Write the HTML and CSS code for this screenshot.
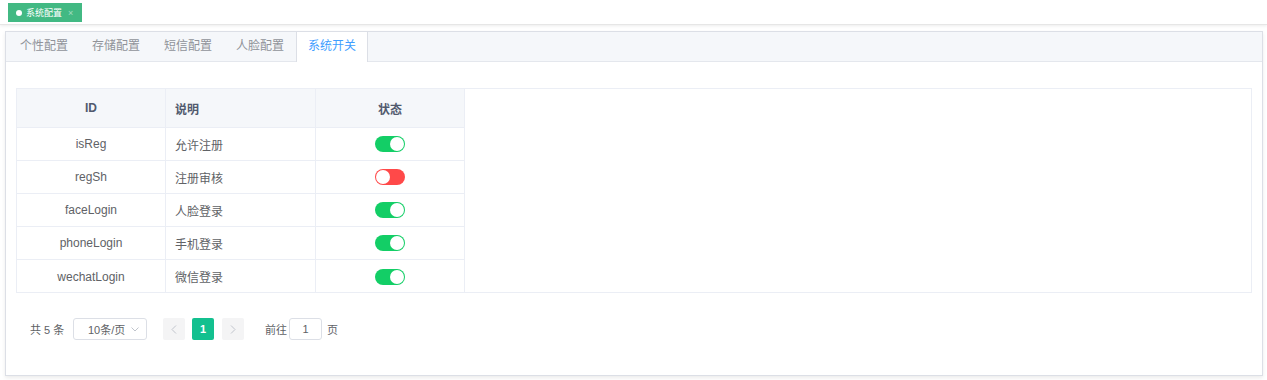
FILE: index.html
```html
<!DOCTYPE html>
<html lang="zh">
<head>
<meta charset="utf-8">
<link rel="stylesheet" href="styles.css">
</head>
<body>
<div class="tagsbar">
  <span class="tag"><span class="dot"></span>系统配置<span class="close">×</span></span>
</div>
<div class="card">
  <div class="tabs">
    <div class="tab">个性配置</div>
    <div class="tab">存储配置</div>
    <div class="tab">短信配置</div>
    <div class="tab">人脸配置</div>
    <div class="tab active">系统开关</div>
  </div>
  <div class="content">
    <div class="table">
      <div class="row head">
        <div class="cell c">ID</div>
        <div class="cell">说明</div>
        <div class="cell c">状态</div>
      </div>
      <div class="row">
        <div class="cell c">isReg</div>
        <div class="cell">允许注册</div>
        <div class="cell c"><span class="sw on"></span></div>
      </div>
      <div class="row">
        <div class="cell c">regSh</div>
        <div class="cell">注册审核</div>
        <div class="cell c"><span class="sw off"></span></div>
      </div>
      <div class="row">
        <div class="cell c">faceLogin</div>
        <div class="cell">人脸登录</div>
        <div class="cell c"><span class="sw on"></span></div>
      </div>
      <div class="row">
        <div class="cell c">phoneLogin</div>
        <div class="cell">手机登录</div>
        <div class="cell c"><span class="sw on"></span></div>
      </div>
      <div class="row last">
        <div class="cell c">wechatLogin</div>
        <div class="cell">微信登录</div>
        <div class="cell c"><span class="sw on"></span></div>
      </div>
    </div>
    <div class="pager">
      <span class="total">共 5 条</span>
      <span class="select"><span>10条/页</span><svg width="8" height="5" viewBox="0 0 8 5"><path d="M0.5 0.5 L4 4 L7.5 0.5" fill="none" stroke="#c0c4cc" stroke-width="1"/></svg></span>
      <span class="pbtn"><svg width="6" height="9" viewBox="0 0 6 9"><path d="M5 0.5 L1 4.5 L5 8.5" fill="none" stroke="#c0c4cc" stroke-width="1"/></svg></span>
      <span class="pnum">1</span>
      <span class="pbtn"><svg width="6" height="9" viewBox="0 0 6 9"><path d="M1 0.5 L5 4.5 L1 8.5" fill="none" stroke="#c0c4cc" stroke-width="1"/></svg></span>
      <span class="goto">前往<span class="jump">1</span>页</span>
    </div>
  </div>
</div>
</body>
</html>
```
FILE: styles.css
```css
* { box-sizing: border-box; }
html, body { margin: 0; padding: 0; background: #fff; }
body {
  font-family: "Helvetica Neue", "Liberation Sans", "Noto Sans CJK SC", sans-serif;
  font-size: 12px;
  color: #606266;
}
.tagsbar {
  height: 25px;
  padding: 3px 8px 0;
  border-bottom: 1px solid #e6e6e6;
  box-shadow: 0 1px 3px rgba(0,0,0,0.08);
}
.tag {
  display: inline-flex;
  align-items: center;
  white-space: nowrap;
  height: 19px;
  padding: 0 8px 0 7px;
  background: #42b983;
  color: #fff;
  font-size: 9px;
  border: 1px solid #42b983;
}
.tag .dot {
  flex: none;
  width: 6px; height: 6px; border-radius: 50%;
  background: #fff; margin-right: 4px;
}
.tag .close { margin-left: 6px; font-size: 9px; opacity: 0.5; }
.card {
  margin: 6px 4px 4px 5px;
  border: 1px solid #dcdfe6;
  box-shadow: 0 2px 4px rgba(0,0,0,0.08);
  height: 345px;
}
.tabs {
  display: flex;
  height: 30px;
  padding-left: 2px;
  background: #f5f7fa;
  border-bottom: 1px solid #e4e7ed;
}
.tab {
  height: 30px;
  line-height: 29px;
  padding: 0 11px;
  border-left: 1px solid transparent;
  border-right: 1px solid transparent;
  color: #909399;
  font-size: 12px;
}
.tab.active {
  background: #fff;
  color: #409eff;
  border-left-color: #dcdfe6;
  border-right-color: #dcdfe6;
}
.content { padding: 26px 10px 0 10px; }
.table {
  border: 1px solid #ebeef5;
  height: 205px;
}
.row {
  display: grid;
  grid-template-columns: 149px 150px 149px;
  height: 33px;
}
.row.head { height: 39px; }
.cell {
  display: flex;
  align-items: center;
  padding: 0 9px;
  border-right: 1px solid #ebeef5;
  border-bottom: 1px solid #ebeef5;
  color: #606266;
}
.cell.c { justify-content: center; }
.head .cell {
  background: #f5f7fa;
  color: #515a6e;
  font-weight: bold;
}
.row.last .cell { border-bottom: none; }
.sw {
  position: relative;
  display: inline-block;
  width: 30px;
  height: 16px;
  border-radius: 8px;
}
.sw::after {
  content: "";
  position: absolute;
  top: 1px;
  width: 14px; height: 14px;
  border-radius: 50%;
  background: #fff;
}
.sw.on { background: #13ce66; }
.sw.on::after { left: 15px; }
.sw.off { background: #ff4949; }
.sw.off::after { left: 1px; }
.pager {
  display: flex;
  align-items: center;
  height: 22px;
  margin-top: 25px;
  padding-left: 14px;
  font-size: 12px;
  color: #606266;
}
.total { width: 43px; font-size: 11px; }
.select {
  display: inline-flex;
  align-items: center;
  justify-content: space-between;
  width: 74px;
  height: 22px;
  padding: 0 7px 0 14px;
  border: 1px solid #dcdfe6;
  border-radius: 3px;
  margin-right: 16px;
  font-size: 11px;
}
.pbtn {
  display: inline-flex;
  align-items: center;
  justify-content: center;
  width: 22px; height: 22px;
  background: #f4f4f5;
  border-radius: 2px;
}
.pnum {
  display: inline-flex;
  align-items: center;
  justify-content: center;
  width: 22px; height: 22px;
  margin: 0 8px 0 7px;
  background: #13c08f;
  color: #fff;
  font-weight: bold;
  font-size: 11px;
  border-radius: 2px;
}
.goto { display: inline-flex; align-items: center; margin-left: 21px; font-size: 11px; }
.jump {
  display: inline-flex;
  align-items: center;
  justify-content: center;
  width: 33px; height: 22px;
  margin: 0 5px 0 2px;
  border: 1px solid #dcdfe6;
  border-radius: 3px;
}
```
